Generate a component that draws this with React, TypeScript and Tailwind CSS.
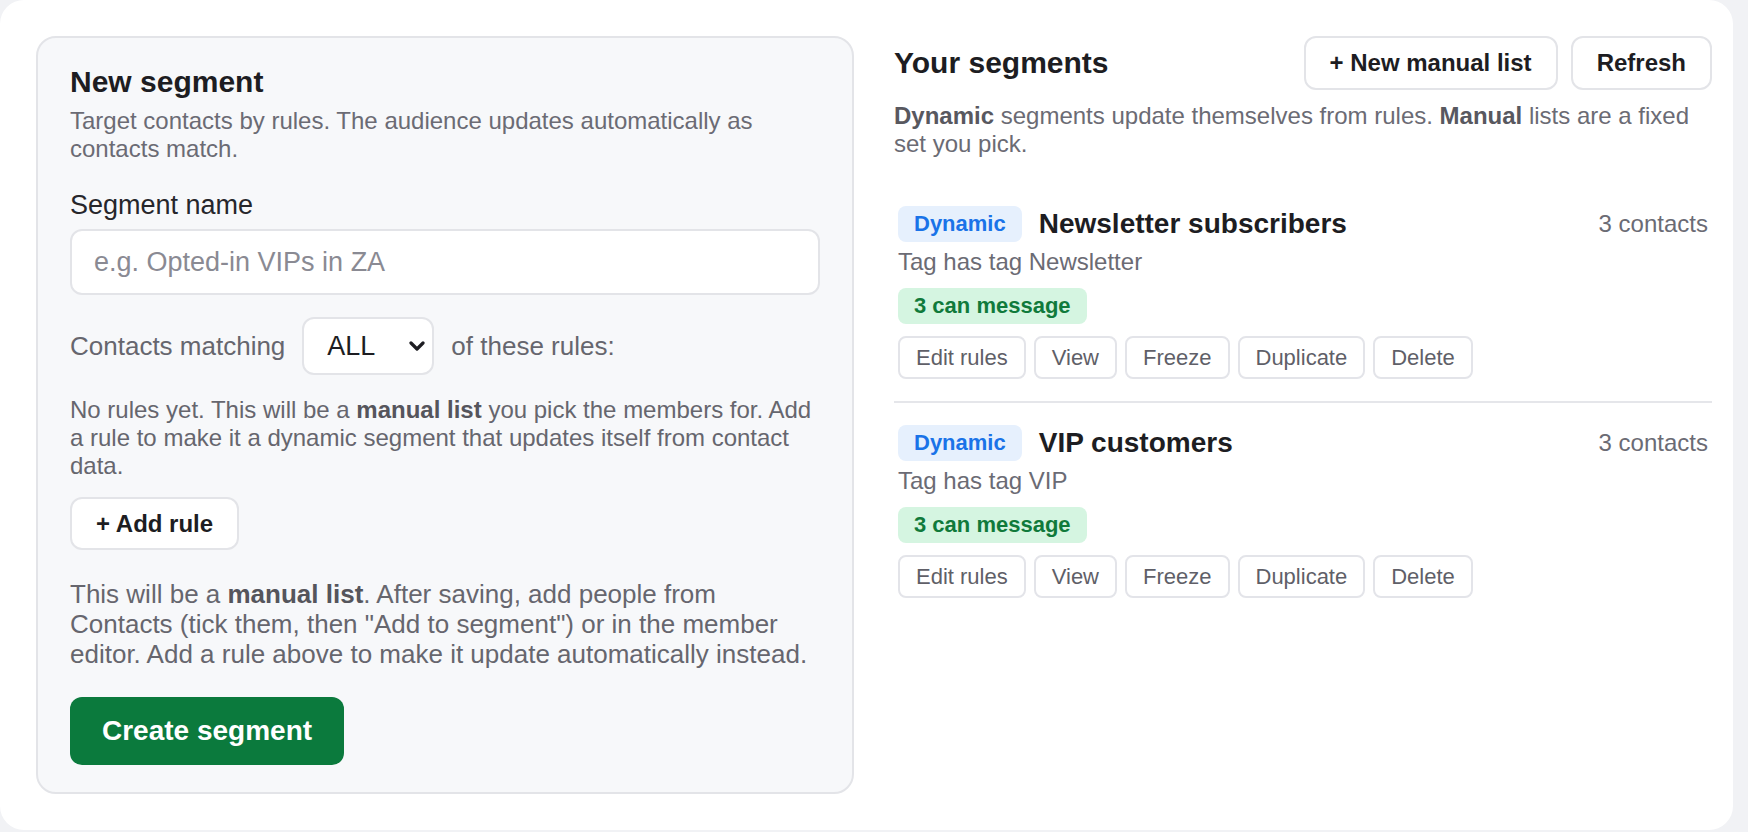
import { useState } from "react";

interface Segment {
  id: number;
  name: string;
  rule: string;
  contacts: number;
  reachable: number;
}

const segments: Segment[] = [
  { id: 1, name: "Newsletter subscribers", rule: "Tag has tag Newsletter", contacts: 3, reachable: 3 },
  { id: 2, name: "VIP customers", rule: "Tag has tag VIP", contacts: 3, reachable: 3 },
];

function SegmentCard({ segment }: { segment: Segment }) {
  return (
    <div className="px-[4px] py-[22px]">
      <div className="flex h-[36px] items-center">
        <span className="rounded-[8px] bg-[#e6f0fd] px-[16px] py-[5px] text-[22px] font-bold leading-[normal] text-[#1a73e8]">
          Dynamic
        </span>
        <span className="ml-[17px] text-[28px] font-bold leading-[normal] text-[#1d1d22]">
          {segment.name}
        </span>
        <span className="ml-auto text-[24px] leading-[normal] text-[#6b6b74]">
          {segment.contacts} contacts
        </span>
      </div>
      <p className="mt-[6px] text-[24px] leading-[normal] text-[#6b6b74]">{segment.rule}</p>
      <span className="mt-[12px] inline-block rounded-[8px] bg-[#d5f5e1] px-[16px] py-[5px] text-[22px] font-bold leading-[normal] text-[#107a3b]">
        {segment.reachable} can message
      </span>
      <div className="mt-[12px] flex gap-[8px]">
        {["Edit rules", "View", "Freeze", "Duplicate", "Delete"].map((label) => (
          <button
            key={label}
            className="flex h-[43px] items-center rounded-[8px] border-2 border-[#e3e4e9] bg-white px-[16px] text-[22px] leading-[normal] text-[#5f5f68]"
          >
            {label}
          </button>
        ))}
      </div>
    </div>
  );
}

export default function App() {
  const [name, setName] = useState("");
  const [match, setMatch] = useState("ALL");

  return (
    <div className="h-[832px] w-[1748px] overflow-hidden bg-[#f1f2f5] font-['Liberation_Sans',Arial,sans-serif]">
      <div className="grid h-[830px] w-[1733px] grid-cols-2 items-start gap-[40px] rounded-[24px] bg-white pl-[36px] pr-[21px] pt-[36px]">
        {/* left: new segment form */}
        <div className="rounded-[20px] border-2 border-[#e3e4e8] bg-[#f7f8fa] px-[32px] pb-[27px] pt-[27px]">
          <h2 className="text-[30px] font-bold leading-[normal] text-[#1d1d22]">New segment</h2>
          <p className="mt-[8px] text-[24px] leading-[normal] text-[#6b6b74]">
            Target contacts by rules. The audience updates automatically as contacts match.
          </p>
          <label className="mt-[27px] block text-[27px] leading-[normal] text-[#26262b]">
            Segment name
          </label>
          <input
            value={name}
            onChange={(e) => setName(e.target.value)}
            placeholder="e.g. Opted-in VIPs in ZA"
            className="mt-[8px] block h-[66px] w-full rounded-[12px] border-2 border-[#e3e4e8] bg-white px-[22px] text-[27px] text-[#1d1d22] outline-none placeholder:text-[#8a8a93]"
          />
          <div className="mt-[22px] flex items-center gap-[17px] text-[26px] leading-[normal] text-[#66666e]">
            <span>Contacts matching</span>
            <div className="relative">
              <select
                value={match}
                onChange={(e) => setMatch(e.target.value)}
                className="block h-[58px] w-[132px] appearance-none rounded-[12px] border-2 border-[#e3e4e8] bg-white pl-[23px] text-[27px] text-[#1d1d22] outline-none"
              >
                <option>ALL</option>
                <option>ANY</option>
              </select>
              <svg
                className="pointer-events-none absolute right-[8px] top-[24px]"
                width="18"
                height="12"
                viewBox="0 0 18 12"
                fill="none"
              >
                <polyline points="3,2 9,8 15,2" stroke="#1d1d22" strokeWidth="3.2" strokeLinecap="round" strokeLinejoin="round" />
              </svg>
            </div>
            <span>of these rules:</span>
          </div>
          <p className="mt-[21px] text-[24px] leading-[normal] text-[#66666e]">
            No rules yet. This will be a <b className="text-[#55555c]">manual list</b> you pick the members for. Add a
            rule to make it a dynamic segment that updates itself from contact data.
          </p>
          <button className="mt-[17px] flex h-[53px] items-center rounded-[12px] border-2 border-[#e3e4e8] bg-white px-[24px] text-[24px] font-bold text-[#1d1d22]">
            + Add rule
          </button>
          <p className="mt-[29px] text-[26px] leading-[30px] text-[#66666e]">
            This will be a <b className="text-[#55555c]">manual list</b>. After saving, add people from Contacts (tick
            them, then "Add to segment") or in the member editor. Add a rule above to make it update automatically
            instead.
          </p>
          <button className="mt-[28px] flex h-[68px] items-center rounded-[12px] bg-[#0b7a3d] px-[32px] text-[28px] font-bold text-white">
            Create segment
          </button>
        </div>

        {/* right: segment list */}
        <div>
          <div className="flex h-[54px] items-center">
            <h2 className="text-[30px] font-bold leading-[normal] text-[#1d1d22]">Your segments</h2>
            <div className="ml-auto flex gap-[13px]">
              <button className="flex h-[54px] items-center rounded-[12px] border-2 border-[#e3e4e8] bg-white px-[24px] text-[24px] font-bold text-[#1d1d22]">
                + New manual list
              </button>
              <button className="flex h-[54px] items-center rounded-[12px] border-2 border-[#e3e4e8] bg-white px-[24px] text-[24px] font-bold text-[#1d1d22]">
                Refresh
              </button>
            </div>
          </div>
          <p className="mt-[12px] text-[24px] leading-[normal] text-[#6b6b74]">
            <b className="text-[#58585f]">Dynamic</b> segments update themselves from rules.{" "}
            <b className="text-[#58585f]">Manual</b> lists are a fixed set you pick.
          </p>
          <div className="mt-[26px] divide-y-2 divide-[#e5e6ea]">
            {segments.map((s) => (
              <SegmentCard key={s.id} segment={s} />
            ))}
          </div>
        </div>
      </div>
    </div>
  );
}
